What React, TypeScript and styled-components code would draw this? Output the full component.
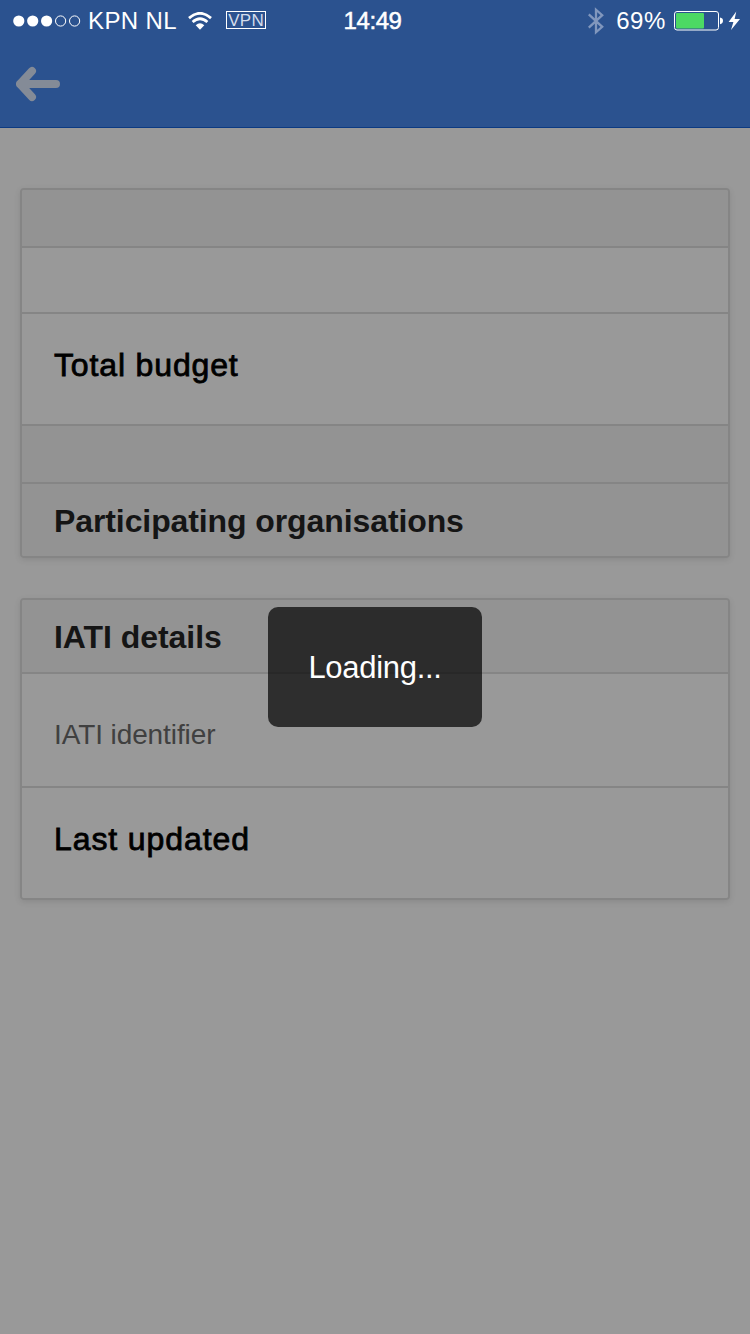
import React from "react";
import styled, { createGlobalStyle } from "styled-components";

const GlobalStyle = createGlobalStyle`
  * { box-sizing: border-box; }
  body {
    margin: 0;
    background: #999999;
    font-family: "Liberation Sans", Arial, sans-serif;
  }
`;

const Screen = styled.div`
  position: relative;
  width: 750px;
  height: 1334px;
  overflow: hidden;
  background: #999999;
`;

const Header = styled.header`
  height: 128px;
  background: #2b528f;
  border-bottom: 1px solid #0c3a82;
`;

const StatusBar = styled.div`
  display: flex;
  justify-content: space-between;
  height: 40px;
  padding: 0 10px 0 12px;
  color: #ffffff;
`;

const StatusGroup = styled.div<{ $width: number; $end?: boolean }>`
  display: flex;
  align-items: center;
  justify-content: ${(p) => (p.$end ? "flex-end" : "flex-start")};
  width: ${(p) => p.$width}px;
  height: 41px;
`;

const StatusText = styled.span<{ $spacing?: number; $stroke?: number }>`
  font-size: 24px;
  line-height: 41px;
  white-space: nowrap;
  letter-spacing: ${(p) => p.$spacing ?? 0}px;
  -webkit-text-stroke: ${(p) => p.$stroke ?? 0}px currentColor;
`;

const Signal = styled.svg`
  margin-right: 7px;
`;

const Wifi = styled.svg`
  margin-left: 11px;
`;

const VpnBadge = styled.span`
  width: 40px;
  height: 18px;
  margin: 0 0 1px 14px;
  border: 1px solid #ffffff;
  font-size: 17px;
  line-height: 17px;
  text-align: center;
  letter-spacing: 0.2px;
  color: #d3dceb;
`;

const Bluetooth = styled.svg`
  margin-right: 12px;
`;

const Battery = styled.svg`
  margin-left: 8px;
`;

const NavBar = styled.nav`
  display: flex;
  align-items: center;
  height: 88px;
  padding-left: 16px;
`;

const Content = styled.main`
  display: flex;
  flex-direction: column;
  gap: 40px;
  padding: 60px 20px;
`;

const Card = styled.section`
  border: 2px solid #858585;
  border-radius: 4px;
  box-shadow: 0 2px 6px rgba(0, 0, 0, 0.1);
  overflow: hidden;
`;

const Row = styled.div<{ $height: number; $divider?: boolean }>`
  display: flex;
  align-items: center;
  box-sizing: content-box;
  height: ${(p) => p.$height}px;
  padding: 0 32px;
  background: ${(p) => (p.$divider ? "#939393" : "#999999")};
  border-bottom: 2px solid #858585;

  &:last-child {
    border-bottom: 0;
  }
`;

const SectionTitle = styled.h2<{ $spacing: number }>`
  margin: 2px 0 0;
  font-size: 32px;
  line-height: 40px;
  font-weight: 700;
  letter-spacing: ${(p) => p.$spacing}px;
  color: #151515;
`;

const ItemTitle = styled.h3<{ $spacing: number }>`
  margin: 0 0 8px;
  font-size: 32px;
  line-height: 40px;
  font-weight: 400;
  letter-spacing: ${(p) => p.$spacing}px;
  color: #000000;
  -webkit-text-stroke: 0.8px #000000;
`;

const ItemLabel = styled.p`
  margin: 10px 0 0;
  font-size: 28px;
  line-height: 34px;
  letter-spacing: -0.1px;
  color: #404040;
`;

const Overlay = styled.div`
  position: absolute;
  inset: 0;
  display: flex;
  align-items: center;
  justify-content: center;
`;

const LoadingBox = styled.div`
  display: flex;
  align-items: center;
  justify-content: center;
  width: 214px;
  height: 120px;
  padding-top: 1px;
  border-radius: 10px;
  background: rgba(0, 0, 0, 0.7);
  color: #ffffff;
  font-size: 31px;
  line-height: 40px;
  letter-spacing: -0.3px;
`;

export default function App() {
  return (
    <Screen>
      <GlobalStyle />
      <Header>
        <StatusBar>
          <StatusGroup $width={275}>
            <Signal width="69" height="12" viewBox="0 0 69 12">
              {[6.8, 20.7, 34.6].map((cx) => (
                <circle key={cx} cx={cx} cy="6" r="5.6" fill="#fff" />
              ))}
              {[48.6, 62.6].map((cx) => (
                <circle key={cx} cx={cx} cy="6" r="5.1" fill="none" stroke="#fff" />
              ))}
            </Signal>
            <StatusText $spacing={0.4}>KPN NL</StatusText>
            <Wifi width="24" height="18" viewBox="0 0 24 18">
              <path d="M12 17.7 L7.7 13.3 Q12 9.3 16.3 13.3 Z" fill="#fff" />
              <path d="M1 6.1 Q12 -3.5 23 6.1" fill="none" stroke="#fff" strokeWidth="2.8" />
              <path d="M4.6 10.1 Q12 3.4 19.4 10.1" fill="none" stroke="#fff" strokeWidth="2.7" />
            </Wifi>
            <VpnBadge>VPN</VpnBadge>
          </StatusGroup>
          <StatusGroup $width={140}>
            <StatusText $spacing={-0.4} $stroke={0.5}>14:49</StatusText>
          </StatusGroup>
          <StatusGroup $width={200} $end>
            <Bluetooth width="16" height="28" viewBox="0 0 16 28">
              <path
                d="M0.8 7.4 L14.2 19.8 L8 25.3 V2.7 L14.2 8.2 L0.8 20.6"
                fill="none"
                stroke="#8197bd"
                strokeWidth="2.3"
              />
            </Bluetooth>
            <StatusText $spacing={0.6}>69%</StatusText>
            <Battery width="66" height="20" viewBox="0 0 66 20">
              <rect x="0.5" y="0.5" width="44" height="18.5" rx="2.5" fill="none" stroke="#fff" />
              <rect x="2" y="2" width="28" height="15.5" rx="1" fill="#4cd964" />
              <path d="M46 6.4 Q49 6.9 49 9.8 Q49 12.7 46 13.2 Z" fill="#fff" />
              <path d="M62.3 0.4 L54.6 11 H59.4 L57 19 L66 7.9 H60.6 Z" fill="#fff" />
            </Battery>
          </StatusGroup>
        </StatusBar>
        <NavBar>
          <svg width="44" height="36" viewBox="0 0 44 36" aria-label="Back">
            <path d="M4 18 L11 10.5 V25.5 Z" fill="#848b97" />
            <path
              d="M16 5 L4 18 L16 31 M4 18 H40"
              fill="none"
              stroke="#848b97"
              strokeWidth="8"
              strokeLinecap="round"
              strokeLinejoin="round"
            />
          </svg>
        </NavBar>
      </Header>

      <Content>
        <Card>
          <Row $height={56} $divider />
          <Row $height={64} />
          <Row $height={110}>
            <ItemTitle $spacing={0.85}>Total budget</ItemTitle>
          </Row>
          <Row $height={56} $divider />
          <Row $height={72} $divider>
            <SectionTitle $spacing={-0.1}>Participating organisations</SectionTitle>
          </Row>
        </Card>
        <Card>
          <Row $height={72} $divider>
            <SectionTitle $spacing={-0.05}>IATI details</SectionTitle>
          </Row>
          <Row $height={112}>
            <ItemLabel>IATI identifier</ItemLabel>
          </Row>
          <Row $height={110}>
            <ItemTitle $spacing={0.9}>Last updated</ItemTitle>
          </Row>
        </Card>
      </Content>

      <Overlay>
        <LoadingBox>Loading...</LoadingBox>
      </Overlay>
    </Screen>
  );
}
